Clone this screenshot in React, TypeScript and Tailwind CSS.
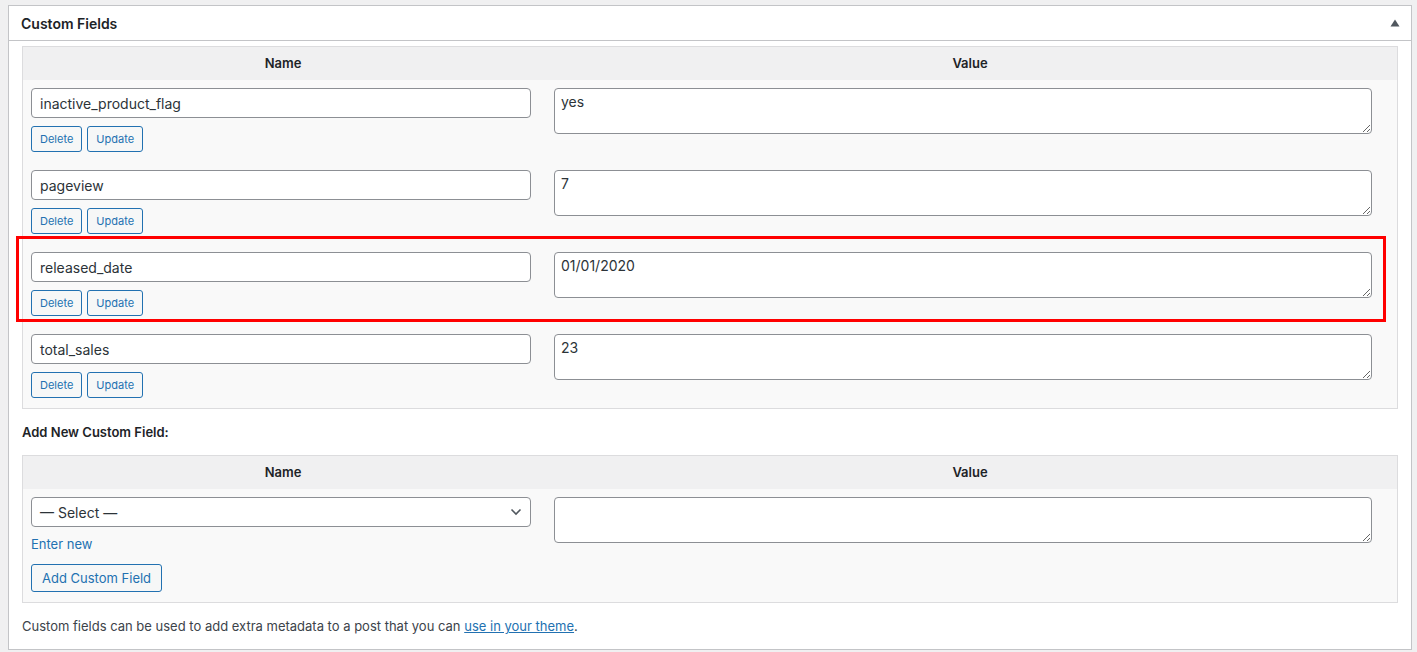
import React from "react";

const rows = [
  { name: "inactive_product_flag", value: "yes" },
  { name: "pageview", value: "7" },
  { name: "released_date", value: "01/01/2020", marked: true },
  { name: "total_sales", value: "23" },
];

const font = { fontFamily: "Inter, 'Noto Sans', 'Liberation Sans', sans-serif" };

function SmallButton({ children }: { children: React.ReactNode }) {
  return (
    <button className="h-[26px] rounded-[3px] border border-[#2271b1] bg-[#f6f7f7] px-[8px] text-[11px] leading-none text-[#2271b1]">
      {children}
    </button>
  );
}

function ValueBox({ value }: { value: string }) {
  return (
    <textarea
      readOnly
      defaultValue={value}
      className="block h-[46px] w-full rounded-[4px] border border-[#8c8f94] bg-white px-[6px] py-[3px] text-[14px] leading-[20px] text-[#2c3338] outline-none"
      style={font}
    />
  );
}

function HeaderRow() {
  return (
    <div className="flex h-[33px] items-center bg-[#f0f0f1] text-[13px] font-semibold text-[#1d2327]">
      <div className="w-[520px] text-center">Name</div>
      <div className="flex-1 text-center">Value</div>
    </div>
  );
}

function FieldRow({ name, value, marked }: { name: string; value: string; marked?: boolean }) {
  return (
    <div className="relative flex h-[82px] pt-[8px]">
      <div className="w-[520px] pl-[8px] pr-[12px]">
        <div className="flex h-[30px] items-center rounded-[4px] border border-[#8c8f94] bg-white px-[8px] text-[14px] text-[#2c3338]">
          {name}
        </div>
        <div className="mt-[8px] flex gap-[5px]">
          <SmallButton>Delete</SmallButton>
          <SmallButton>Update</SmallButton>
        </div>
      </div>
      <div className="flex-1 pl-[11px] pr-[25px]">
        <ValueBox value={value} />
      </div>
      {marked && (
        <div className="pointer-events-none absolute -left-[7px] -top-[8px] h-[86px] w-[1370px] border-[3px] border-[#ff0000]" />
      )}
    </div>
  );
}

export default function App() {
  return (
    <div className="min-h-[652px] bg-[#f0f0f1] pl-[8px] pr-[5px] pt-[5px]" style={font}>
      <div className="border border-[#c3c4c7] bg-white">
        <div className="flex h-[35px] items-center justify-between border-b border-[#c3c4c7] pl-[12px] pr-[11px]">
          <h2 className="text-[14px] font-semibold text-[#1d2327]">Custom Fields</h2>
          <svg width="10" height="8" viewBox="0 0 10 8" className="text-[#50575e]">
            <path d="M5 0.5 L9.5 7.5 L0.5 7.5 Z" fill="currentColor" />
          </svg>
        </div>

        <div className="px-[13px] pb-[12px] pt-[5px]">
          <div className="border border-[#dcdcde] bg-[#f9f9f9]">
            <HeaderRow />
            {rows.map((r) => (
              <FieldRow key={r.name} {...r} />
            ))}
          </div>

          <p className="mb-[13px] mt-[13px] text-[13px] leading-[20px] font-semibold text-[#1d2327]">Add New Custom Field:</p>

          <div className="border border-[#dcdcde] bg-[#f9f9f9]">
            <HeaderRow />
            <div className="flex pb-[10px] pt-[8px]">
              <div className="w-[520px] pl-[8px] pr-[12px]">
                <div className="flex h-[30px] items-center justify-between rounded-[4px] border border-[#8c8f94] bg-white pl-[8px] pr-[8px] text-[14px] text-[#2c3338]">
                  <span>— Select —</span>
                  <svg width="12" height="8" viewBox="0 0 12 8" className="text-[#50575e]">
                    <path d="M1.5 1.5 L6 6 L10.5 1.5" fill="none" stroke="currentColor" strokeWidth="1.6" />
                  </svg>
                </div>
                <div className="mt-[8px] text-[13px] leading-[18px] text-[#2271b1]">Enter new</div>
                <button className="mt-[11px] h-[28px] rounded-[3px] border border-[#2271b1] bg-[#f6f7f7] px-[10px] text-[13px] leading-none text-[#2271b1]">
                  Add Custom Field
                </button>
              </div>
              <div className="flex-1 pl-[11px] pr-[25px]">
                <ValueBox value="" />
              </div>
            </div>
          </div>

          <p className="mt-[14px] text-[13px] text-[#3c434a]">
            Custom fields can be used to add extra metadata to a post that you can{" "}
            <a className="text-[#2271b1] underline">use in your theme</a>.
          </p>
        </div>
      </div>
    </div>
  );
}
